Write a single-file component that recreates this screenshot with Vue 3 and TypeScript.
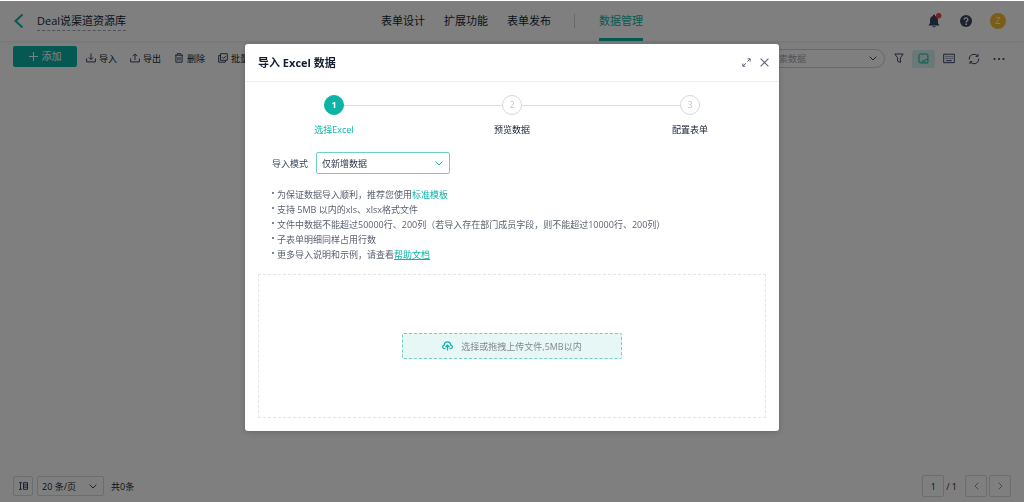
<script setup lang="ts">
import { ref } from 'vue'

const navItems = ['表单设计', '扩展功能', '表单发布']
const steps = ['选择Excel', '预览数据', '配置表单']
const currentStep = ref(0)
const mode = ref('add')
const pageSize = ref('20')
const keyword = ref('')
const page = ref('1')
</script>

<template>
  <div class="page">
    <header class="topbar">
      <div class="brand">
        <button class="icon-btn" aria-label="返回">
          <svg width="10" height="16" viewBox="0 0 10 16" fill="none" stroke="#0db3a6" stroke-width="2"><path d="M8.5 1.5 1.5 8l7 6.5" /></svg>
        </button>
        <h1>Deal说渠道资源库</h1>
      </div>
      <nav>
        <a v-for="item in navItems" :key="item" href="#">{{ item }}</a>
        <span class="divider"></span>
        <a href="#" class="active">数据管理</a>
      </nav>
      <div class="account">
        <button class="icon-btn" aria-label="通知">
          <svg width="14" height="16" viewBox="0 0 14 16"><path d="M.8 12.500h10.400v-.8L10 10.300V7c0-2-1.200-3.600-3-4V1.800H5V3C3.200 3.400 2 5 2 7v3.300L.8 11.700zM4.200 13.200h3.600c-.2 1.500-3.400 1.500-3.600 0z" fill="#3a4460" /><circle cx="10.700" cy="2.800" r="2.700" fill="#f5403d" /></svg>
        </button>
        <button class="icon-btn" aria-label="帮助">
          <svg width="12" height="12" viewBox="0 0 12 12"><circle cx="6" cy="6" r="6" fill="#3a4460" /><path d="M4.200 4.700c0-2.400 3.700-2.300 3.700 0C7.900 6 6.100 6 6.100 7.500" fill="none" stroke="#fff" stroke-width="1.300" /><circle cx="6.100" cy="9.200" r=".9" fill="#fff" /></svg>
        </button>
        <span class="avatar">Z</span>
      </div>
    </header>

    <main>
      <div class="toolbar">
        <button class="add">
          <svg width="9" height="9" viewBox="0 0 9 9" stroke="#fff"><path d="M4.500 0v9M0 4.500h9" /></svg>添加
        </button>
        <div class="actions">
          <button><svg width="10" height="10" viewBox="0 0 10 10"><path d="M.6 5.500v3.400h8.800V5.500M5 .5v6M2.800 4.400 5 6.600l2.200-2.200" /></svg>导入</button>
          <button><svg width="10" height="10" viewBox="0 0 10 10"><path d="M.6 5.500v3.400h8.800V5.500M5 7V1M2.800 3.100 5 .9l2.200 2.200" /></svg>导出</button>
          <button><svg width="10" height="10" viewBox="0 0 10 10"><path d="M1 2.200h8M3.200 2V.7h3.600V2M1.900 2.200v7h6.200v-7M4 4v3.500M6 4v3.500" /></svg>删除</button>
          <button><svg width="10" height="10" viewBox="0 0 10 10"><path d="M2.500.7h6.800v6.600H2.500zM2.500 2.500H.7v6.700h6.600V7.400M4 3.900l1.500 1.500L7.900 3" /></svg>批量</button>
        </div>
        <div class="tools">
          <div class="search">
            <input v-model="keyword" type="text" placeholder="搜索数据" aria-label="搜索数据" />
            <svg width="8" height="5" viewBox="0 0 8 5"><path d="m.7.700 3.300 3.300L7.300.7" /></svg>
          </div>
          <button aria-label="筛选"><svg width="10" height="11" viewBox="0 0 10 11"><path d="M.8 1h8.400L6.400 4.800v4.700l-2.800-1.300V4.800z" /></svg></button>
          <button class="on" aria-label="表单视图"><svg width="11" height="11" viewBox="0 0 11 11"><path d="M4 9.900H2.300C1.400 9.900 1 9.500 1 8.700V2.200C1 1.400 1.400 1 2.300 1h6.400c.8 0 1.200.4 1.200 1.200V9.900H4C3.400 7.700 5.800 6.800 6.300 8.200M6.300 9.500C6 6.700 7.800 6.400 9.900 6.400" /></svg></button>
          <button aria-label="键盘"><svg width="12" height="11" viewBox="0 0 12 11"><path d="M.7 1.200h10.600v8.500H.7zM3.200 7.700h5.600" /><path d="M2.500 3.400h7M2.500 5.400h7" stroke-dasharray="1 1" /></svg></button>
          <button aria-label="刷新"><svg width="12" height="12" viewBox="0 0 12 12"><path d="M1.200 6.500A4.800 4.800 0 0 1 9.700 3M10.800 5.500A4.800 4.800 0 0 1 2.300 9M10 1v2.400H7.700M2 11V8.600h2.300" /></svg></button>
          <button aria-label="更多"><svg width="12" height="4" viewBox="0 0 12 4"><g fill="#3a4460" stroke="none"><circle cx="1.500" cy="2" r="1.100" /><circle cx="6" cy="2" r="1.100" /><circle cx="10.500" cy="2" r="1.100" /></g></svg></button>
        </div>
      </div>
    </main>

    <footer>
      <button class="box small" aria-label="列设置">
        <svg width="9" height="8" viewBox="0 0 9 8"><path d="M0 .7h3M0 7.300h3M1.500.7v6.600M4.500.7h4v6.600h-4zM4.500 2.900h4M4.500 5.100h4" /></svg>
      </button>
      <label class="size">
        <select v-model="pageSize" class="box" aria-label="每页条数">
          <option value="20">20 条/页</option>
          <option value="50">50 条/页</option>
        </select>
        <svg width="8" height="5" viewBox="0 0 8 5"><path d="m.7.700 3.300 3.300L7.300.7" /></svg>
      </label>
      <span>共0条</span>
      <div class="pager">
        <input v-model="page" class="box" type="text" aria-label="页码" />
        <span>/ 1</span>
        <button class="box" aria-label="上一页"><svg width="5" height="8" viewBox="0 0 5 8"><path d="M4.300.7 1 4l3.300 3.300" /></svg></button>
        <button class="box" aria-label="下一页"><svg width="5" height="8" viewBox="0 0 5 8"><path d="M.7.700 4 4 .7 7.300" /></svg></button>
      </div>
    </footer>

    <div class="mask">
      <section class="dialog" role="dialog" aria-modal="true" aria-labelledby="dialog-title">
        <div class="dialog-head">
          <h2 id="dialog-title">导入 Excel 数据</h2>
          <button class="icon-btn" aria-label="全屏"><svg width="9" height="9" viewBox="0 0 9 9" fill="none" stroke="#5b6478"><path d="M5.300 3.700 8 1M5.500.8h2.700v2.700M3.700 5.300 1 8M.8 5.500v2.700h2.700" /></svg></button>
          <button class="icon-btn" aria-label="关闭"><svg width="9" height="9" viewBox="0 0 9 9" fill="none" stroke="#5b6478" stroke-width="1.100"><path d="m.6.600 7.800 7.800M8.400.6.6 8.400" /></svg></button>
        </div>
        <ol class="steps">
          <li v-for="(step, i) in steps" :key="step" :class="{ current: i === currentStep }">
            <span class="num">{{ i + 1 }}</span>
            <span class="name">{{ step }}</span>
          </li>
        </ol>
        <div class="mode">
          <label for="import-mode">导入模式</label>
          <div class="mode-select">
            <select id="import-mode" v-model="mode">
              <option value="add">仅新增数据</option>
              <option value="update">仅更新数据</option>
            </select>
            <svg width="8" height="5" viewBox="0 0 8 5"><path d="m.5.600 3.500 3.300L7.500.6" /></svg>
          </div>
        </div>
        <ul class="tips">
          <li>为保证数据导入顺利，推荐您使用<a href="#">标准模板</a></li>
          <li>支持 5MB 以内的xls、xlsx格式文件</li>
          <li>文件中数据不能超过50000行、200列（若导入存在部门成员字段，则不能超过10000行、200列）</li>
          <li>子表单明细同样占用行数</li>
          <li>更多导入说明和示例，请查看<a href="#" class="underlined">帮助文档</a></li>
        </ul>
        <div class="dropzone">
          <button>
            <svg width="11" height="10" viewBox="0 0 10 9" fill="none" stroke="#0db3a6" stroke-width="1.100"><path d="M3.300 7H2.500C.2 7-.1 4.200 2 3.700 2.300-.2 7.700-.2 8 3.700c2.100.5 1.800 3.300-.5 3.300h-.8M5 8.700V4M3.200 5.600 5 3.800l1.800 1.800" /></svg>
            选择或拖拽上传文件,5MB以内
          </button>
        </div>
      </section>
    </div>
  </div>
</template>

<style>
body {
  margin: 0;
}
</style>

<style scoped>
* {
  box-sizing: border-box;
}
.page {
  --teal: #0db3a6;
  --ink: #141e31;
  min-height: 100vh;
  display: flex;
  flex-direction: column;
  background: #fff;
  color: var(--ink);
  font: 9px/15px "Open Sans", "Noto Sans CJK SC", sans-serif;
}
button,
input,
select {
  margin: 0;
  padding: 0;
  border: 0;
  background: none;
  color: inherit;
  font: inherit;
  appearance: none;
  outline: none;
}
button {
  display: flex;
  align-items: center;
  justify-content: center;
  white-space: nowrap;
}
a {
  color: inherit;
  text-decoration: none;
}
svg {
  flex: none;
}
h1,
h2 {
  margin: 0;
  font-size: 11px;
}
.topbar {
  display: grid;
  grid-template-columns: 1fr auto 1fr;
  height: 41px;
  padding: 0 14px;
  box-shadow: 0 1px 3px rgba(20, 30, 49, 0.1);
}
.brand {
  display: flex;
  align-items: center;
  gap: 13px;
}
.brand h1 {
  padding: 1px 0;
  line-height: 17px;
  font-weight: 400;
  border-bottom: 1px dashed #a0a5b0;
}
nav {
  display: flex;
  gap: 19px;
  padding-top: 3px;
  font-size: 11px;
  line-height: 35px;
}
.divider {
  width: 1px;
  height: 14px;
  margin: 11px 5px 0 4px;
  background: #d0d3da;
}
.active {
  color: var(--teal);
  border-bottom: 3px solid var(--teal);
}
.account {
  display: flex;
  align-items: center;
  justify-content: flex-end;
  gap: 18px;
  padding-right: 4px;
}
.avatar {
  width: 16px;
  border-radius: 50%;
  background: #f5bd2b;
  color: #fff;
  line-height: 16px;
  text-align: center;
}
main {
  flex: 1;
  padding: 5px 14px 5px 13px;
}
.toolbar {
  display: flex;
}
.add {
  width: 64px;
  height: 21px;
  gap: 4px;
  border-radius: 2px;
  background: var(--teal);
  color: #fff;
  font-size: 10px;
}
.actions {
  display: flex;
  gap: 13px;
  padding: 2px 0 0 9px;
}
.actions button {
  gap: 3px;
}
.actions svg,
.tools svg,
footer svg {
  fill: none;
  stroke: #3a4460;
}
.tools {
  display: flex;
  align-items: center;
  gap: 2px;
  margin-left: auto;
  padding-top: 3px;
}
.tools button {
  width: 23px;
  height: 18px;
  border-radius: 2px;
}
.tools .on {
  background: #d5f2ef;
}
.tools .on svg {
  stroke: var(--teal);
}
.search {
  display: flex;
  align-items: center;
  width: 134px;
  height: 19px;
  padding: 0 7px 0 18px;
  border: 1px solid #cdd0d6;
  border-radius: 10px;
}
.search input {
  flex: 1;
  min-width: 0;
}
.search input::placeholder {
  color: #a0a5b0;
}
footer {
  display: flex;
  align-items: center;
  height: 32px;
  padding: 0 13px;
}
.box {
  width: 22px;
  height: 22px;
  border: 1px solid #d8dae0;
  border-radius: 2px;
  text-align: center;
}
.small {
  width: 20px;
  height: 20px;
}
.size {
  display: grid;
  align-items: center;
  margin: 0 7px 0 4px;
}
.size > * {
  grid-area: 1 / 1;
}
.size .box {
  width: 67px;
  height: 20px;
  padding-left: 4px;
  text-align: left;
}
.size svg {
  justify-self: end;
  margin-right: 7px;
  pointer-events: none;
}
.pager {
  display: flex;
  align-items: center;
  gap: 2px;
  margin-left: auto;
}
.pager span {
  margin-right: 6px;
}
.pager svg {
  stroke: #8a90a0;
}
.mask {
  position: fixed;
  inset: 1px 0 0;
  display: flex;
  align-items: flex-start;
  justify-content: center;
  padding-top: 43px;
  background: rgba(0, 0, 0, 0.5);
}
.dialog {
  width: 534px;
  max-width: 100%;
  padding-bottom: 13px;
  border-radius: 3px;
  background: #fff;
  box-shadow: 0 1px 6px rgba(0, 0, 0, 0.2);
}
.dialog-head {
  display: flex;
  align-items: center;
  gap: 9px;
  height: 38px;
  padding: 0 10px 0 13px;
  border-bottom: 1px solid #eceef1;
}
.dialog-head h2 {
  flex: 1;
  font-weight: 700;
}
.steps {
  display: grid;
  grid-template-columns: repeat(3, 1fr);
  margin: 0;
  padding: 13px 0 0;
  list-style: none;
}
.steps li {
  position: relative;
  display: flex;
  flex-direction: column;
  align-items: center;
  gap: 7px;
}
.steps li + li::before {
  content: "";
  position: absolute;
  top: 10px;
  right: calc(50% + 10px);
  width: calc(100% - 20px);
  height: 1px;
  background: #dcdee3;
}
.num {
  width: 20px;
  border: 1px solid #d5d8de;
  border-radius: 50%;
  color: #c3c7cf;
  line-height: 18px;
  text-align: center;
}
.current {
  color: var(--teal);
}
.current .num {
  border-color: var(--teal);
  background: var(--teal);
  color: #fff;
  font-weight: 700;
}
.mode {
  display: flex;
  align-items: center;
  gap: 8px;
  padding: 15px 27px 0;
}
.mode label {
  color: #3a4460;
}
.mode-select {
  display: grid;
  align-items: center;
}
.mode-select > * {
  grid-area: 1 / 1;
}
.mode-select select {
  width: 134px;
  height: 22px;
  padding: 0 5px;
  border: 1px solid #6fcfc8;
  border-radius: 2px;
  color: #2b3548;
}
.mode-select svg {
  justify-self: end;
  margin-right: 7px;
  fill: none;
  stroke: var(--teal);
  pointer-events: none;
}
.tips {
  margin: 0;
  padding: 13px 27px 12px;
  color: #5b6270;
  list-style: none;
}
.tips li {
  display: flex;
}
.tips li::before {
  content: "";
  width: 2px;
  height: 2px;
  margin: 5px 3px 0 0;
  border-radius: 50%;
  background: #525967;
}
.tips a {
  color: var(--teal);
}
.tips .underlined {
  text-decoration: underline;
}
.dropzone {
  display: flex;
  align-items: center;
  justify-content: center;
  height: 144px;
  margin: 0 13px;
  border: 1px dashed #e3e5e8;
}
.dropzone button {
  width: 220px;
  height: 26px;
  gap: 8px;
  border: 1px dashed #6fcfc8;
  border-radius: 2px;
  background: #e7f7f6;
  color: #838892;
}
</style>
